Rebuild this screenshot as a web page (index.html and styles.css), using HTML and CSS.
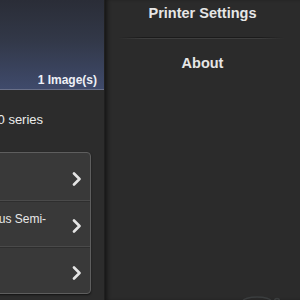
FILE: index.html
```html
<!DOCTYPE html>
<html lang="en">
<head>
  <meta charset="UTF-8" />
  <meta name="viewport" content="width=device-width, initial-scale=1.0"/>
  <title>Print</title>
  <link rel="stylesheet" href="styles.css">
</head>
<body>

  <div class="screen">
    <!-- Main view, slid left under the menu -->
    <div class="main">
      <div class="main-inner">
        <div class="preview">
          <span class="count">1 Image(s)</span>
        </div>

        <div class="printer-name">Canon MG6200 series</div>

        <div class="options">
          <div class="option">
            <span class="option-label">Letter</span>
            <svg class="chevron" viewBox="0 0 11 14"><path d="M3 1.5 L8.5 7 L3 12.5" /></svg>
          </div>
          <div class="option">
            <span class="option-label">Photo Paper Plus Semi-gloss</span>
            <svg class="chevron" viewBox="0 0 11 14"><path d="M3 1.5 L8.5 7 L3 12.5" /></svg>
          </div>
          <div class="option">
            <span class="option-label">Borderless</span>
            <svg class="chevron" viewBox="0 0 11 14"><path d="M3 1.5 L8.5 7 L3 12.5" /></svg>
          </div>
        </div>
      </div>
    </div>

    <!-- Side menu -->
    <div class="menu">
      <div class="menu-item">Printer Settings</div>
      <div class="menu-divider"></div>
      <div class="menu-item">About</div>

      <svg class="logo" viewBox="0 0 60 12">
        <ellipse cx="22" cy="13" rx="14" ry="4" />
        <circle cx="42" cy="13" r="2.5" />
      </svg>
    </div>
  </div>

</body>
</html>
```

FILE: styles.css
```css
* {
  margin: 0;
  padding: 0;
  box-sizing: border-box;
}

body {
  width: 300px;
  height: 300px;
  overflow: hidden;
  background: #2b2b2b;
  font-family: 'Liberation Sans', Arial, sans-serif;
  color: #e8e8e8;
}

.screen {
  display: flex;
  height: 300px;
}

.main {
  width: 104px;
  flex-shrink: 0;
  overflow: hidden;
  background: #2c2c2c;
}

.main-inner {
  width: 204px;
  margin-left: -100px;
}

.preview {
  height: 90px;
  display: flex;
  justify-content: flex-end;
  align-items: flex-end;
  padding: 0 7px 2px 0;
  background: linear-gradient(to bottom, #2a2d37 0%, #323848 45%, #3f4a6b 100%);
  border-bottom: 1px solid #6a7088;
}

.count {
  font-size: 12px;
  font-weight: bold;
  color: #eef0f6;
}

.printer-name {
  padding: 22px 0 0 13px;
  height: 62px;
  font-size: 13px;
  color: #ececec;
  white-space: nowrap;
}

.options {
  margin: 0 13px;
  background: #393939;
  border: 1px solid #5e5e5e;
  border-radius: 4px;
  box-shadow: 0 1px 2px rgba(0, 0, 0, 0.6);
}

.option {
  height: 46.7px;
  display: flex;
  align-items: center;
  padding: 5px 8px 0 4px;
  border-top: 1px solid #4a4a4a;
  box-shadow: inset 0 1px 0 #2e2e2e;
}

.option:first-child {
  border-top: none;
  box-shadow: none;
}

.option-label {
  flex: 1;
  padding-right: 20px;
  font-size: 12px;
  line-height: 14px;
  color: #e8e8e8;
  align-self: flex-start;
  padding-top: 6px;
}

.chevron {
  width: 11px;
  height: 14px;
  fill: none;
  stroke: #e4e4e4;
  stroke-width: 2.6;
  stroke-linecap: round;
  stroke-linejoin: round;
}

.menu {
  flex: 1;
  position: relative;
  background: #2b2b2b;
  box-shadow: inset 4px 0 4px -2px rgba(0, 0, 0, 0.55);
  border-left: 1px solid #1f1f1f;
}

.menu-item {
  height: 25px;
  padding-top: 5px;
  text-align: center;
  font-size: 14.5px;
  font-weight: bold;
  color: #e6e6e6;
}

.menu-item + .menu-divider + .menu-item {
  height: auto;
  padding-top: 16px;
}

.menu-divider {
  height: 2px;
  margin: 12px 16px 0 13px;
  background:
    linear-gradient(to right, transparent, #1b1b1b 15%, #1b1b1b 85%, transparent) top / 100% 1px no-repeat,
    linear-gradient(to right, transparent, #3e3e3e 15%, #3e3e3e 85%, transparent) bottom / 100% 1px no-repeat;
}

.logo {
  position: absolute;
  left: 130px;
  bottom: 0;
  width: 60px;
  height: 12px;
  fill: none;
  stroke: #3a3d3e;
  stroke-width: 1.5;
}
```
